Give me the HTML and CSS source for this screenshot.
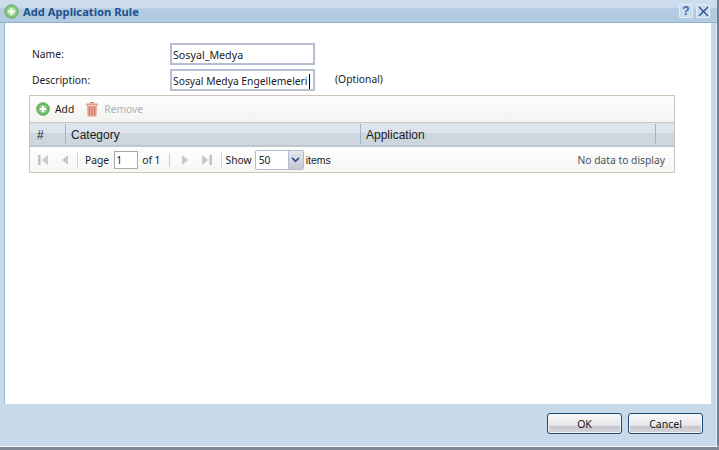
FILE: index.html
```html
<!DOCTYPE html>
<html lang="en">
<head>
<meta charset="utf-8">
<title>Add Application Rule</title>
<link rel="stylesheet" href="styles.css">
</head>
<body>
<div class="window">
  <header class="titlebar">
    <svg class="title-icon" width="15" height="15" viewBox="0 0 16 16"><circle cx="8" cy="8" r="7.300" fill="#7cc576" stroke="#7ea67a"/><circle cx="8" cy="8" r="4.800" fill="#a6dc9b"/><path d="M8 4.500v7M4.500 8h7" stroke="#fff" stroke-width="2.200"/></svg>
    <span class="title-text">Add Application Rule</span>
    <span class="title-tools">
      <span class="tool tool-help">?</span>
      <span class="tool"><svg width="11" height="11" viewBox="0 0 11 11"><path d="M1 1l9 9M10 1l-9 9" stroke="#2b4a8c" stroke-width="1.300"/></svg></span>
    </span>
  </header>
  <main class="content">
    <div class="form">
      <div class="form-row">
        <label class="form-label">Name:</label>
        <div class="input input-name">Sosyal_Medya</div>
      </div>
      <div class="form-row">
        <label class="form-label">Description:</label>
        <div class="input">Sosyal Medya Engellemeleri<span class="caret"></span></div>
        <span class="optional">(Optional)</span>
      </div>
    </div>
    <section class="grid">
      <div class="toolbar">
        <button class="tb-btn">
          <svg width="14" height="14" viewBox="0 0 16 16"><circle cx="8" cy="8" r="7.200" fill="#6dbb68" stroke="#5f9f5c"/><circle cx="8" cy="8" r="4.600" fill="#98d48f"/><path d="M8 4.500v7M4.500 8h7" stroke="#fff" stroke-width="2.200"/></svg>
          <span>Add</span>
        </button>
        <button class="tb-btn tb-btn-off">
          <svg width="14" height="16" viewBox="0 0 14 16"><path d="M1 2.500h12v2H1z" fill="#e39a88"/><path d="M5 2.500V1h4v1.500z" fill="#d98f7e"/><path d="M2 5h10l-.6 10.500H2.600z" fill="#e8a08e"/><path d="M4.500 6v8M7 6v8M9.500 6v8" stroke="#cf8170"/></svg>
          <span>Remove</span>
        </button>
      </div>
      <div class="grid-head">
        <div class="col col-num">#</div>
        <div class="col col-cat">Category</div>
        <div class="col col-app">Application</div>
        <div class="col col-end"></div>
      </div>
      <div class="pager">
        <svg class="pg" width="12" height="12" viewBox="0 0 12 12"><path d="M1 1h2.500v10H1z" fill="#bfc3c3"/><path d="M11 1v10L5 6z" fill="#c6cac9"/></svg>
        <svg class="pg pg-prev" width="8" height="12" viewBox="0 0 8 12"><path d="M7 1v10L1 6z" fill="#c6cac9"/></svg>
        <span class="sep"></span>
        <span class="pg-text pg-page">Page</span>
        <span class="pg-input">1</span>
        <span class="pg-text">of 1</span>
        <span class="sep"></span>
        <svg class="pg pg-next" width="8" height="12" viewBox="0 0 8 12"><path d="M1 1v10l6-5z" fill="#c6cac9"/></svg>
        <svg class="pg pg-last" width="12" height="12" viewBox="0 0 12 12"><path d="M1 1v10l6-5z" fill="#c6cac9"/><path d="M8.500 1H11v10H8.500z" fill="#bfc3c3"/></svg>
        <span class="sep"></span>
        <span class="pg-text">Show</span>
        <span class="combo"><span class="combo-val">50</span><span class="combo-btn"><svg width="9" height="6" viewBox="0 0 10 7"><path d="M1 1l4 4 4-4" fill="none" stroke="#2f4f86" stroke-width="2"/></svg></span></span>
        <span class="pg-items">items</span>
        <span class="no-data">No data to display</span>
      </div>
    </section>
  </main>
  <footer class="footer">
    <button class="btn">OK</button>
    <button class="btn">Cancel</button>
  </footer>
</div>
</body>
</html>
```
FILE: styles.css
```css
* { box-sizing: border-box; }
html, body { margin: 0; height: 100%; }
body { background: #7f8a96; overflow: hidden; font-family: "Noto Sans", sans-serif; font-size: 10.300px; color: #1c1c1c; }
.window {
  width: 719px; height: 447px; display: flex; flex-direction: column;
  background: #c8dae9; border-right: 2px solid #6f7f94; border-bottom: 1px solid #f4f7fa;
  box-shadow: inset -1px 0 0 #e8eef5;
}
.titlebar {
  height: 23px; flex: none; display: flex; align-items: center; padding: 0 7px 0 4px;
  background: linear-gradient(#cddded 0, #cddded 7px, #b3cbe0 9px, #b3cbe0 100%);
  border-bottom: 1px solid #8eb0d2;
}
.title-icon { flex: none; margin-right: 4px; }
.title-text { font-weight: 700; font-size: 11.200px; color: #20508f; }
.title-tools { margin-left: auto; display: flex; gap: 3px; }
.tool {
  width: 14px; height: 14px; border: 1px solid #e6eff8; border-radius: 2px; background: #c9dcf0;
  display: flex; align-items: center; justify-content: center;
  font: 700 12px "Liberation Sans", sans-serif; color: #3f6aa0;
}
.content {
  flex: none; height: 381px; margin: 0 6px 0 4px; background: #fff; padding-top: 19px;
  border-left: 1px solid #9dbad8;
}
.form { padding-left: 27px; }
.form-row { display: flex; align-items: center; height: 24px; margin-bottom: 2px; }
.form-label { width: 138px; color: #222; }
.input {
  width: 145px; height: 22px; border: 2px solid #b8bed2; background: #fff; padding-left: 1px;
  line-height: 21px; white-space: nowrap; overflow: hidden; color: #1c1c1c;
}
.input-name { font-size: 10.700px; }
.caret { display: inline-block; width: 1px; height: 15px; background: #000; vertical-align: -4px; margin-left: 1px; }
.optional { margin-left: 20px; position: relative; top: -1px; }
.grid { width: 646px; margin: 3px 0 0 24px; border: 1px solid #c9c8b8; }
.toolbar {
  height: 27px; display: flex; align-items: center; gap: 11px; padding-left: 6px;
  background: linear-gradient(#fdfdfd, #f3f3f1); border-bottom: 1px solid #c9c8b8;
}
.tb-btn { display: flex; align-items: center; gap: 5px; border: 0; padding: 0; background: none; font: inherit; color: #1c1c1c; }
.tb-btn-off { color: #b0b0b0; }
.grid-head {
  height: 24px; display: flex; border-bottom: 2px solid #c0c6cc;
  background: linear-gradient(#dee4ed 0, #dee4ed 10px, #ced6e0 10px, #cdd5df 100%);
  font-family: "Liberation Sans", sans-serif; font-size: 12px;
}
.col { display: flex; align-items: center; padding: 1px 0 0 5px; border-right: 1px solid #a0b4ca; margin: 1px 0; }
.col-num { width: 36px; padding-left: 7px; }
.col-cat { width: 295px; }
.col-app { width: 295px; }
.col-end { border: 0; flex: 1; }
.pager {
  height: 25px; display: flex; align-items: center; padding: 1px 0 0 7px;
  background: linear-gradient(#fdfdfd, #f6f6f4);
}
.pg { flex: none; }
.pg-prev { margin-left: 12px; }
.pg-next { margin-left: 11px; }
.pg-last { margin-left: 12px; }
.sep { width: 1px; height: 14px; background: #cdcdc4; margin-left: 8px; }
.pg-text { margin-left: 4px; white-space: nowrap; }
.pg-page { margin-left: 7px; }
.pg-input {
  width: 24px; height: 18px; margin-left: 5px; margin-right: 0; border: 1px solid #a9a9a9; padding-left: 1px; line-height: 16px; background: #fff;
}
.combo { display: flex; width: 49px; height: 20px; margin-left: 3px; border: 1px solid #b5bcd2; border-radius: 2px; background: #fff; }
.combo-val { width: 32px; padding-left: 3px; line-height: 18px; }
.combo-btn { flex: 1; display: flex; align-items: center; justify-content: center; border-left: 1px solid #b5bcd2; background: linear-gradient(#e6e8ee, #c3c7d0); }
.pg-items { margin-left: 2px; font-family: "Liberation Sans", sans-serif; font-size: 10.500px; }
.no-data { margin-left: auto; margin-right: 9px; color: #4a4f5c; }
.footer { flex: 1; display: flex; justify-content: flex-end; align-items: flex-start; gap: 6px; padding: 9px 14px 0 0; }
.btn {
  width: 75px; height: 21px; padding: 0; border: 1px solid #1d4a73; border-radius: 3px;
  background: linear-gradient(#f8f8fa, #e8e8ec 60%, #c7c7cf 62%, #d4d4da); box-shadow: inset 0 0 0 1px #f2f4f7;
  font: 10.500px "Noto Sans", sans-serif; color: #1c1c1c;
}
```
